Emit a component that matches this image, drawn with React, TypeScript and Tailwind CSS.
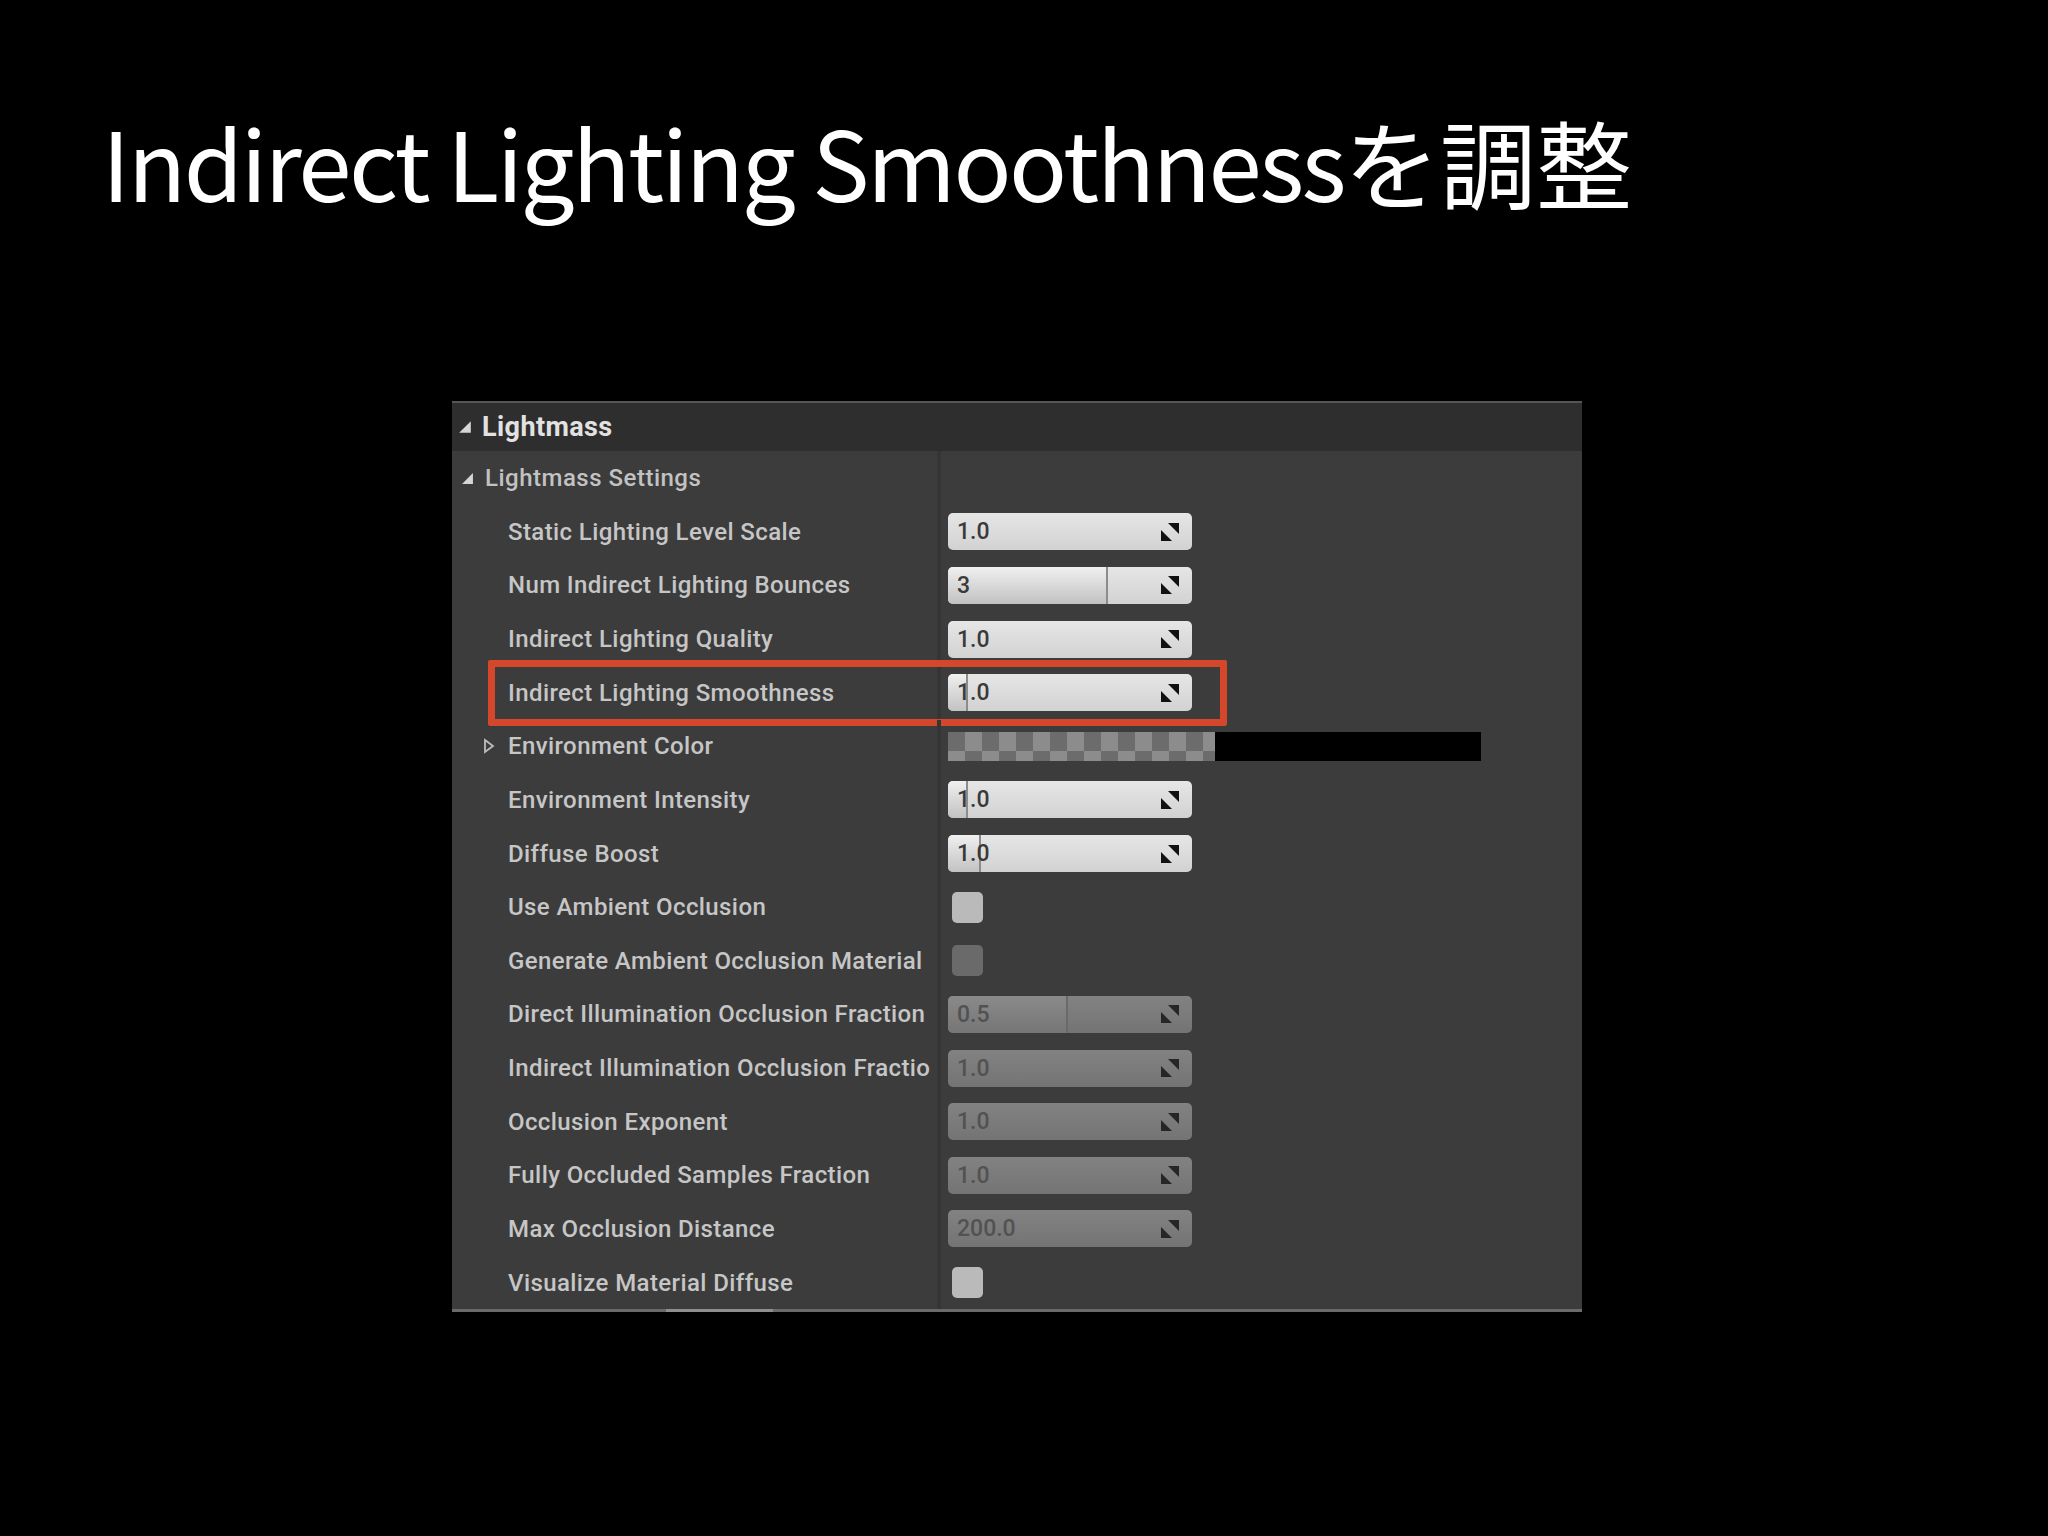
import React from 'react'

type Row = {
  label: string
  kind: 'num' | 'check' | 'color'
  value?: string
  fill?: number
  disabled?: boolean
  highlight?: boolean
  expandable?: boolean
}

const rows: Row[] = [
  { label: 'Static Lighting Level Scale', kind: 'num', value: '1.0' },
  { label: 'Num Indirect Lighting Bounces', kind: 'num', value: '3', fill: 160 },
  { label: 'Indirect Lighting Quality', kind: 'num', value: '1.0' },
  { label: 'Indirect Lighting Smoothness', kind: 'num', value: '1.0', fill: 20, highlight: true },
  { label: 'Environment Color', kind: 'color', expandable: true },
  { label: 'Environment Intensity', kind: 'num', value: '1.0', fill: 20 },
  { label: 'Diffuse Boost', kind: 'num', value: '1.0', fill: 33 },
  { label: 'Use Ambient Occlusion', kind: 'check' },
  { label: 'Generate Ambient Occlusion Material', kind: 'check', disabled: true },
  { label: 'Direct Illumination Occlusion Fraction', kind: 'num', value: '0.5', fill: 120, disabled: true },
  // the panel column is too narrow for the full name, as in the editor
  { label: 'Indirect Illumination Occlusion Fractio', kind: 'num', value: '1.0', disabled: true },
  { label: 'Occlusion Exponent', kind: 'num', value: '1.0', disabled: true },
  { label: 'Fully Occluded Samples Fraction', kind: 'num', value: '1.0', disabled: true },
  { label: 'Max Occlusion Distance', kind: 'num', value: '200.0', disabled: true },
  { label: 'Visualize Material Diffuse', kind: 'check' },
]

function ExpandedArrow({ size }: { size: number }) {
  return (
    <svg width={size} height={size} viewBox="0 0 12 12" className="shrink-0">
      <polygon points="11,1 11,11 1,11" fill="#d6d6d6" />
    </svg>
  )
}

function SpinIcon({ dark }: { dark?: boolean }) {
  const c = dark ? '#262626' : '#111111'
  return (
    <svg width="22" height="22" viewBox="0 0 22 22" className="shrink-0">
      <polygon points="9,2 20,2 20,13" fill={c} />
      <polygon points="2,9 2,20 13,20" fill={c} />
    </svg>
  )
}

function NumberBox({ value, fill, disabled }: { value: string; fill?: number; disabled?: boolean }) {
  return (
    <div
      className={`relative flex h-[37px] w-[244px] items-center overflow-hidden rounded-[5px] ${
        disabled ? 'bg-gradient-to-b from-[#828282] to-[#747474]' : 'bg-gradient-to-b from-[#e6e6e6] to-[#d2d2d2]'
      }`}
    >
      {fill !== undefined && (
        <div
          className={`absolute left-0 top-0 h-full border-r-2 ${
            disabled
              ? 'border-[#6a6a6a] bg-gradient-to-b from-[#8a8a8a] to-[#767676]'
              : 'border-[#8c8c8c] bg-gradient-to-b from-[#f0f0f0] to-[#c2c2c2]'
          }`}
          style={{ width: fill }}
        />
      )}
      <span
        className={`relative pl-[9px] text-[23px] font-medium leading-none ${disabled ? 'text-[#525252]' : 'text-[#3a3a3a]'}`}
      >
        {value}
      </span>
      <div className="relative ml-auto mr-[11px] flex items-center">
        <SpinIcon dark={disabled} />
      </div>
    </div>
  )
}

function ValueCell({ row }: { row: Row }) {
  if (row.kind === 'check') {
    return (
      <div
        className={`ml-[4px] h-[31px] w-[31px] rounded-[5px] ${row.disabled ? 'bg-[#6a6a6a]' : 'bg-[#bababa]'}`}
      />
    )
  }
  if (row.kind === 'color') {
    return (
      <div className="flex h-[29px] w-[533px]">
        <div className="h-full w-[267px] [background-image:conic-gradient(#8c8c8c_25%,#6c6c6c_0_50%,#8c8c8c_0_75%,#6c6c6c_0)] [background-size:34px_38px]" />
        <div className="h-full flex-1 bg-black" />
      </div>
    )
  }
  return <NumberBox value={row.value ?? ''} fill={row.fill} disabled={row.disabled} />
}

export default function App() {
  return (
    <div className="min-h-[1536px] w-[2048px] bg-black" style={{ fontFamily: 'Roboto, "Liberation Sans", sans-serif' }}>
      <h1
        className="pl-[102px] pt-[113px] text-[96px] font-normal leading-none text-white"
        style={{ fontFamily: '"Noto Sans CJK JP", "Noto Sans", sans-serif' }}
      >
        <span className="tracking-[-2.5px]">Indirect Lighting Smoothness</span>
        <span>を調整</span>
      </h1>

      <div className="ml-[452px] mt-[192px] flex w-[1130px] flex-col bg-[#3c3c3c]">
        {/* Header */}
        <div className="flex h-[50px] items-center gap-[10px] border-t-2 border-[#555555] bg-[#2e2e2e] pl-[6px]">
          <ExpandedArrow size={14} />
          <span className="text-[27px] font-bold tracking-[0.4px] text-[#e2e2e2]">Lightmass</span>
        </div>

        {/* Settings group */}
        <div className="flex h-[54px]">
          <div className="flex w-[485px] items-center gap-[11px] pl-[9px]">
            <ExpandedArrow size={13} />
            <span className="text-[24px] font-medium tracking-[0.5px] text-[#c2c2c2]">Lightmass Settings</span>
          </div>
          <div className="w-[4px] bg-[#353535]" />
          <div className="flex-1" />
        </div>

        {rows.map((row) => (
          <div key={row.label} className="relative flex h-[53.64px]">
            <div className="flex w-[485px] items-center overflow-hidden whitespace-nowrap">
              {row.expandable ? (
                <svg width="12" height="16" viewBox="0 0 12 16" className="ml-[31px] mr-[13px] shrink-0">
                  <polygon points="2,2 10,8 2,14" fill="none" stroke="#bdbdbd" strokeWidth="1.8" />
                </svg>
              ) : (
                <div className="w-[56px] shrink-0" />
              )}
              <span className="text-[24px] font-medium tracking-[0.4px] text-[#c6c6c6]">{row.label}</span>
            </div>
            <div className="w-[4px] bg-[#353535]" />
            <div className="flex flex-1 items-center pl-[7px]">
              <ValueCell row={row} />
            </div>
            {row.highlight && (
              <div className="pointer-events-none absolute left-[36px] top-[-6px] h-[66px] w-[739px] rounded-[2px] border-[7px] border-[#d4472a]" />
            )}
          </div>
        ))}

        {/* Bottom scroll edge */}
        <div className="flex h-[3px] bg-[#6a6a6a]">
          <div className="ml-[214px] h-full w-[107px] bg-[#8e8e8e]" />
        </div>
      </div>
    </div>
  )
}
